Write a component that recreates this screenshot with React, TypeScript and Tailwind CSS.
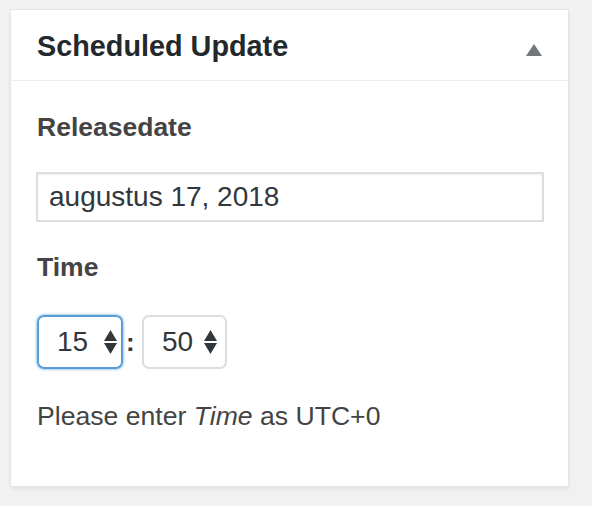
function Arrows() {
  return (
    <svg width="13" height="24" viewBox="0 0 13 24" className="shrink-0">
      <path d="M6.5 0 L13 11 L0 11 Z" fill="#32373c" />
      <path d="M0 13 L13 13 L6.5 24 Z" fill="#32373c" />
    </svg>
  );
}

export default function App() {
  return (
    <div
      className="w-[592px] h-[506px] bg-[#f1f1f1] pt-[9px] pl-[10px]"
      style={{ fontFamily: '"Liberation Sans", Arial, sans-serif' }}
    >
      <div className="w-[559px] h-[478px] border border-[#e5e5e5] bg-white shadow-[0_2px_4px_rgba(0,0,0,0.06)]">
        <div className="h-[71px] border-b border-[#eeeeee] flex justify-between items-start pl-[26px] pr-[26px] pt-[22px]">
          <h2 className="text-[28.8px] leading-[28px] font-bold text-[#23282d]">Scheduled Update</h2>
          <svg width="16" height="12" viewBox="0 0 16 12" className="mt-[12px]">
            <path d="M8 0 L16 12 L0 12 Z" fill="#72777c" />
          </svg>
        </div>

        <div className="pl-[26px] pr-[24px] pt-[33px] flex flex-col">
          <label className="text-[26.5px] leading-[26px] font-bold text-[#444]">Releasedate</label>
          <div className="mt-[32px] -ml-[1px] w-[508px] h-[50px] border-2 border-[#dddddd] shadow-[inset_0_1px_2px_rgba(0,0,0,0.07)] flex items-center pl-[11px]">
            <span className="text-[28px] leading-[28px] text-[#32373c]">augustus 17, 2018</span>
          </div>

          <label className="mt-[32px] text-[26.5px] leading-[26px] font-bold text-[#444]">Time</label>
          <div className="mt-[35px] flex items-center">
            <div className="w-[86px] h-[54px] rounded-[7px] border-2 border-[#5b9dd9] shadow-[0_0_3px_rgba(30,140,190,0.8)] flex items-center pl-[18px]">
              <span className="text-[28px] leading-[28px] text-[#32373c]">15</span>
              <span className="ml-[16px]"><Arrows /></span>
            </div>
            <span className="w-[19px] pl-[3px] text-[26px] leading-[26px] font-bold text-[#32373c]">:</span>
            <div className="w-[85px] h-[54px] rounded-[7px] border-2 border-[#dddddd] flex items-center pl-[18px]">
              <span className="text-[28px] leading-[28px] text-[#32373c]">50</span>
              <span className="ml-[11px]"><Arrows /></span>
            </div>
          </div>

          <p className="mt-[34px] text-[26.6px] leading-[26px] text-[#444]">
            Please enter <em>Time</em> as UTC+0
          </p>
        </div>
      </div>
    </div>
  );
}
